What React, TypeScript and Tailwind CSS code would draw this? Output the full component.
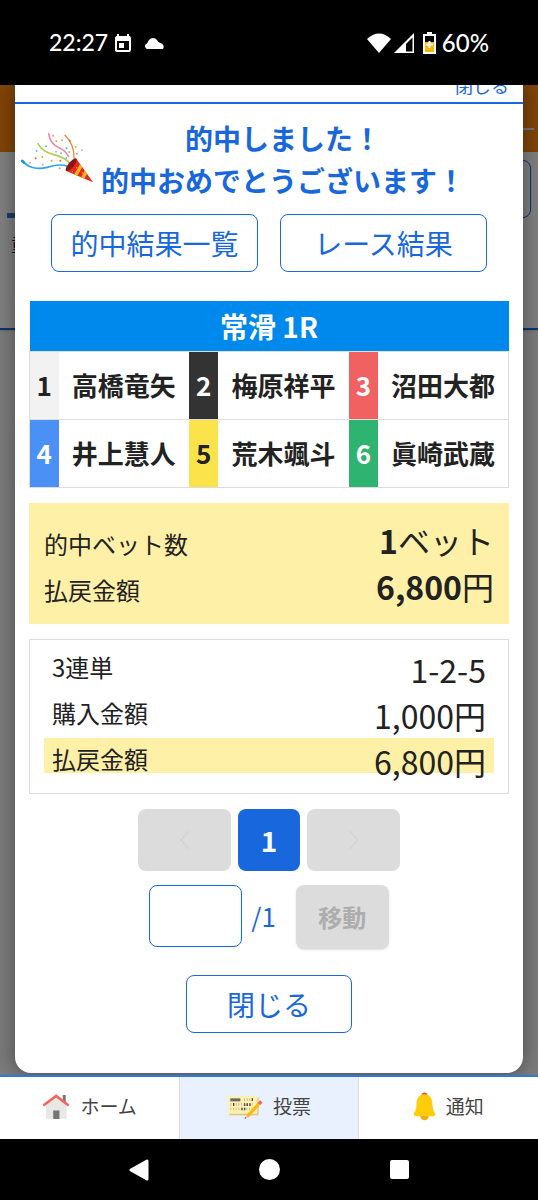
import React, { useState } from 'react';

interface Racer {
  no: number;
  name: string;
  color: string;
}

const racers: Racer[][] = [
  [
    { no: 1, name: '高橋竜矢', color: 'bg-[#f2f2f2] text-[#222]' },
    { no: 2, name: '梅原祥平', color: 'bg-[#333] text-white' },
    { no: 3, name: '沼田大都', color: 'bg-[#f26161] text-white' },
  ],
  [
    { no: 4, name: '井上慧人', color: 'bg-[#4b90f5] text-white' },
    { no: 5, name: '荒木颯斗', color: 'bg-[#fbe34b] text-[#222]' },
    { no: 6, name: '眞崎武蔵', color: 'bg-[#2fb370] text-white' },
  ],
];

const betRows = [
  { label: '3連単', value: '1-2-5', hit: false },
  { label: '購入金額', value: '1,000円', hit: false },
  { label: '払戻金額', value: '6,800円', hit: true },
];

const confetti: [number, number, string][] = [
  [64, 102, '#e8603c'], [84, 98, '#b5c334'], [67, 80, '#5bbcf0'], [95, 66, '#5bbcf0'],
  [116, 34, '#f2a25c'], [126, 51, '#b5c334'], [143, 48, '#e8a06c'], [166, 49, '#e8603c'],
  [184, 68, '#c8c03c'], [165, 83, '#9ec84a'], [125, 82, '#e8a06c'], [140, 87, '#5bbcf0'],
  [157, 72, '#5bbcf0'], [188, 88, '#f28a8a'], [203, 78, '#8fcdf2'], [112, 109, '#e89a3c'],
  [138, 109, '#e8603c'], [136, 132, '#ee7f9d'], [47, 115, '#f2a0b4'], [85, 121, '#f2a0b4'],
  [156, 101, '#5bbcf0'],
];

const PopperIcon = () => (
  <svg className="w-[72px] h-[54px] shrink-0" viewBox="20 20 216 162" fill="none" strokeLinecap="round" aria-hidden="true">
    <path d="M25 111C42 130 70 137 98 129C124 121 142 118 159 126" stroke="#29a8ea" strokeWidth="5" />
    <path d="M24 110L29 115" stroke="#1496e0" strokeWidth="8" />
    <path d="M71 58C80 76 92 84 116 90C144 97 157 104 168 118" stroke="#b5cb50" strokeWidth="5" />
    <path d="M103 28C106 51 117 63 134 70C148 76 157 84 163 97" stroke="#ee8bb0" strokeWidth="5" />
    <path d="M152 33C162 43 168 51 173 64C179 79 180 91 179 104" stroke="#e58a46" strokeWidth="4" />
    {confetti.map(([x, y, fill]) => (
      <circle key={`${x}-${y}`} cx={x} cy={y} r="3" fill={fill} />
    ))}
    <path d="M186 103L236 174L154 139Z" fill="#e32a20" />
    <path d="M197 119L204 128L189 154L180 150ZM211 138L218 148L210 163L201 159Z" fill="#f4b41e" />
    <path d="M186 102C192 112 168 144 155 140C149 132 172 102 186 102Z" fill="#8c1512" />
    <g fill="#f4b41e">
      <circle cx="187" cy="130" r="2" />
      <circle cx="174" cy="141" r="2" />
      <circle cx="204" cy="146" r="2" />
    </g>
  </svg>
);

const HouseIcon = () => (
  <svg className="w-7 h-[27px]" viewBox="126 160 85 80" aria-hidden="true">
    <path d="M189 165h9v26h-9z" fill="#757575" />
    <path d="M138 190L169 167L201 190V237H138Z" fill="#e8e8e4" />
    <path d="M160 212h19v26h-19z" fill="#757575" />
    <path d="M130 197L169 168L207 197" fill="none" stroke="#f2665c" strokeWidth="8" />
  </svg>
);

const TicketIcon = () => (
  <svg className="w-9 h-[25px]" viewBox="676 162 108 75" aria-hidden="true">
    <path d="M683 172h88v54h-88z" fill="#dcc888" />
    <path d="M679 167h88v54h-88z" fill="#fff0b4" />
    <path d="M686 175h30v9h-30z" fill="#6e6a62" />
    <path d="M727 179h30M686 193h72M686 207h72" stroke="#c9bd94" strokeWidth="8" strokeDasharray="3 5" />
    <path d="M752 175v8M696 189v9M729 190v8M737 190v8M745 190v8M721 203v8M729 203v8" stroke="#4c4a44" strokeWidth="4" />
    <path d="M775 188L737 229" stroke="#fcb912" strokeWidth="10" />
    <path d="M779 184L772 192" stroke="#f2665c" strokeWidth="10" />
    <path d="M733 225L741 233L729 236Z" fill="#e8cfa0" />
    <path d="M731 231L734 234L728 237Z" fill="#555" />
  </svg>
);

const BellIcon = () => (
  <svg className="w-[23px] h-[29px]" viewBox="430 157 70 87" aria-hidden="true">
    <circle cx="465" cy="167" r="9" fill="#e5553a" />
    <circle cx="465" cy="229" r="13" fill="#f7a60c" />
    <path d="M465 163C481 163 488 175 489 190C490 207 491 213 496 219C500 225 498 230 491 230H439C432 230 431 225 434 219C440 212 440 206 441 190C442 175 449 163 465 163Z" fill="#ffcc0a" />
  </svg>
);

const StatusBar = () => (
  <header className="h-[85px] bg-black text-white flex items-center justify-between px-[49px] font-['Lato','Open_Sans',sans-serif] text-[23px] font-medium">
    <div className="flex items-center">
      <time>22:27</time>
      <svg className="w-[18px] h-5 ml-[6px]" viewBox="0 0 18 20" aria-hidden="true">
        <path d="M4 1v4M14 1v4" stroke="#fff" strokeWidth="2" />
        <rect x="2" y="4" width="14" height="14" rx="1" fill="none" stroke="#fff" strokeWidth="2" />
        <path d="M2 3h14v5H2zM5 10h5v5H5z" fill="#fff" />
      </svg>
      <svg className="w-5 h-3 ml-3" viewBox="0 0 20 12" fill="#fff" aria-hidden="true">
        <path d="M3 12A3 3 0 0 1 1.500 7.500C4 6 3.500 5 5 3A5 5 0 0 1 13 3C14 5 14.500 5 16.500 6A4 4 0 0 1 19 12Z" />
      </svg>
    </div>
    <div className="flex items-center">
      <svg className="w-6 h-5" viewBox="0 0 24 20" fill="#fff" aria-hidden="true">
        <path d="M12 20L0 6C7 -1.500 17 -1.500 24 6Z" />
      </svg>
      <svg className="w-5 h-5 ml-[3px]" viewBox="0 0 20 20" aria-hidden="true">
        <path d="M0 20L20 0V20Z" fill="#fff" />
        <path d="M12 11L18.500 4.500V18.500H12Z" fill="#000" />
      </svg>
      <svg className="w-[13px] h-[22px] ml-[9px] mr-[6px]" viewBox="0 0 13 22" aria-hidden="true">
        <path d="M4 0h5v2h4v20H0V2h4z" fill="#fff" />
        <path d="M2 4h9v6H2z" fill="#000" />
        <path d="M2 10h9v10H2z" fill="#f9b50b" />
        <path d="M6.500 9v7M3 12.500h7" stroke="#fff" strokeWidth="2" />
      </svg>
      <span className="text-2xl">60%</span>
    </div>
  </header>
);

// Voting page that stays dimmed behind the dialog
const BackPage = () => (
  <div className="[grid-area:1/1] bg-[#f6f6f6]" aria-hidden="true">
    <div className="h-[67px] bg-[#ff8812] flex items-center justify-end pt-5 pr-1">
      <span className="w-6 h-[2px] bg-gray-200" />
    </div>
    <div className="h-[178px] bg-white border-b-2 border-[#1967dc] shadow flex justify-between px-[7px] pt-2">
      <div className="pt-[53px]">
        <div className="w-12 h-[5px] bg-[#2f7fd0]" />
        <div className="pl-1 mt-3 text-lg leading-7 text-[#222]">重</div>
      </div>
      <div className="w-24 h-[58px] rounded-lg border border-[#1967dc]" />
    </div>
  </div>
);

const outlineButton =
  'border border-[#1967dc] rounded-lg bg-white text-[#1967dc] text-[28px] leading-9';

interface HitDialogProps {
  onClose: () => void;
}

const HitDialog: React.FC<HitDialogProps> = ({ onClose }) => {
  const [page, setPage] = useState('');

  return (
    <section
      role="dialog"
      aria-labelledby="hit-title"
      className="[grid-area:1/1] mx-[15px] mb-[2px] bg-white rounded-b-2xl shadow-[0_0_20px_rgba(0,0,0,0.4)] overflow-hidden"
    >
      <div className="h-[19px] border-b-2 border-[#1967dc] flex items-end justify-end overflow-hidden pr-[14px] pb-[5px]">
        <button onClick={onClose} className="text-[#1967dc] text-lg leading-6">閉じる</button>
      </div>

      <div className="px-[14px] pb-10">
        <div className="flex items-start -mx-2 pt-[13px] gap-2">
          <div className="pt-[14px]">
            <PopperIcon />
          </div>
          <h1 id="hit-title" className="text-[28px] leading-[42px] font-bold text-[#1967dc] text-center">
            的中しました！
            <br />
            的中おめでとうございます！
          </h1>
        </div>

        <div className="grid grid-cols-2 gap-[22px] px-[22px] mt-[13px]">
          <button className={`${outlineButton} h-[58px]`}>的中結果一覧</button>
          <button className={`${outlineButton} h-[58px]`}>レース結果</button>
        </div>

        <table className="w-full table-fixed border-collapse mt-[29px] text-[26px] leading-9 font-bold text-[#222]">
          <colgroup>
            <col className="w-[29px]" />
            <col />
            <col className="w-[29px]" />
            <col />
            <col className="w-[29px]" />
            <col />
          </colgroup>
          <thead>
            <tr>
              <th colSpan={6} className="h-[50px] bg-[#0089ec] text-white text-[28px]">常滑 1R</th>
            </tr>
          </thead>
          <tbody className="border border-[#ddd]">
            {racers.map((row, index) => (
              <tr key={index} className="border border-[#ddd]">
                {row.map((racer) => (
                  <React.Fragment key={racer.no}>
                    <td className={`h-[68px] text-center ${racer.color}`}>{racer.no}</td>
                    <td className="text-center whitespace-nowrap">{racer.name}</td>
                  </React.Fragment>
                ))}
              </tr>
            ))}
          </tbody>
        </table>

        <dl className="mt-[15px] bg-[#fff0a7] px-[15px] pt-[14px] pb-[15px] text-[#222]">
          <div className="flex items-baseline justify-between h-[46px] leading-[46px]">
            <dt className="text-2xl leading-[46px]">的中ベット数</dt>
            <dd className="text-[32px] leading-[46px]"><b>1</b>ベット</dd>
          </div>
          <div className="flex items-baseline justify-between h-[46px] leading-[46px]">
            <dt className="text-2xl leading-[46px]">払戻金額</dt>
            <dd className="text-[32px] leading-[46px]"><b>6,800</b>円</dd>
          </div>
        </dl>

        <dl className="mt-[15px] border border-[#ddd] px-[14px] pt-[6px] pb-5 text-[#222] flex flex-col gap-[11px]">
          {betRows.map((row) => (
            <div
              key={row.label}
              className={`flex items-start justify-between h-[35px] px-2 ${row.hit ? 'bg-[#fff0a7]' : ''}`}
            >
              <dt className="text-2xl leading-[42px]">{row.label}</dt>
              <dd className="text-[32px] leading-[46px]">{row.value}</dd>
            </div>
          ))}
        </dl>

        <nav className="flex justify-center gap-[7px] mt-[15px]">
          <button disabled aria-label="前へ" className="w-[93px] h-[62px] rounded-lg bg-[#dcdcdc] flex items-center justify-center">
            <svg className="w-[10px] h-5" viewBox="0 0 10 20" fill="none" stroke="#cfcfcf">
              <path d="M9.500 1L1 10L9.500 19" />
            </svg>
          </button>
          <button className="w-[62px] h-[62px] rounded-lg bg-[#1967dc] text-white text-[28px] leading-9 font-bold">1</button>
          <button disabled aria-label="次へ" className="w-[93px] h-[62px] rounded-lg bg-[#dcdcdc] flex items-center justify-center">
            <svg className="w-[10px] h-5" viewBox="0 0 10 20" fill="none" stroke="#cfcfcf">
              <path d="M0.500 1L9 10L0.500 19" />
            </svg>
          </button>
        </nav>

        <form
          className="flex justify-center items-start mt-[14px]"
          onSubmit={(e) => e.preventDefault()}
        >
          <input
            id="page-no"
            aria-label="ページ番号"
            inputMode="numeric"
            value={page}
            onChange={(e) => setPage(e.target.value)}
            className="w-[93px] h-[62px] rounded-lg border border-[#1967dc] px-3 text-2xl"
          />
          <label htmlFor="page-no" className="ml-[9px] mr-5 text-[26px] leading-[62px] text-[#1967dc]">/1</label>
          <button
            disabled
            className="w-[93px] h-16 rounded-lg bg-[#dcdcdc] text-[#adadad] text-2xl font-bold shadow-sm"
          >
            移動
          </button>
        </form>

        <div className="flex justify-center mt-[26px]">
          <button onClick={onClose} className={`${outlineButton} w-[166px] h-[58px]`}>閉じる</button>
        </div>
      </div>
    </section>
  );
};

const tabs = [
  { label: 'ホーム', icon: <HouseIcon />, active: false },
  { label: '投票', icon: <TicketIcon />, active: true },
  { label: '通知', icon: <BellIcon />, active: false },
];

const App: React.FC = () => {
  const [open, setOpen] = useState(true);

  return (
    <div className="min-h-screen flex flex-col bg-black font-['Noto_Sans_CJK_JP',sans-serif]">
      <StatusBar />

      <main className="grow grid overflow-hidden">
        <BackPage />
        {open && <div className="[grid-area:1/1] bg-black/50" />}
        {open && <HitDialog onClose={() => setOpen(false)} />}
      </main>

      <nav className="h-16 grid grid-cols-3 bg-white border-t-2 border-[#2f78dc] relative">
        {tabs.map((tab) => (
          <a
            key={tab.label}
            href="#"
            className={`flex items-center justify-center gap-[10px] pb-[3px] text-[19px] text-[#444] ${
              tab.active ? 'bg-[#e9f1fe] border-x border-[#ddd]' : ''
            }`}
          >
            {tab.icon}
            {tab.label}
          </a>
        ))}
      </nav>

      <footer className="h-[61px] bg-black flex items-center justify-center gap-[110px]">
        <button aria-label="戻る">
          <svg className="w-5 h-[22px]" viewBox="0 0 20 22" fill="#fff" stroke="#fff" strokeWidth="3" strokeLinejoin="round">
            <path d="M2 11L18 2V20Z" />
          </svg>
        </button>
        <button aria-label="ホーム画面" className="w-[21px] h-[21px] rounded-full bg-white" />
        <button aria-label="履歴" className="w-[19px] h-[19px] rounded-xs bg-white" />
      </footer>
    </div>
  );
};

export default App;
